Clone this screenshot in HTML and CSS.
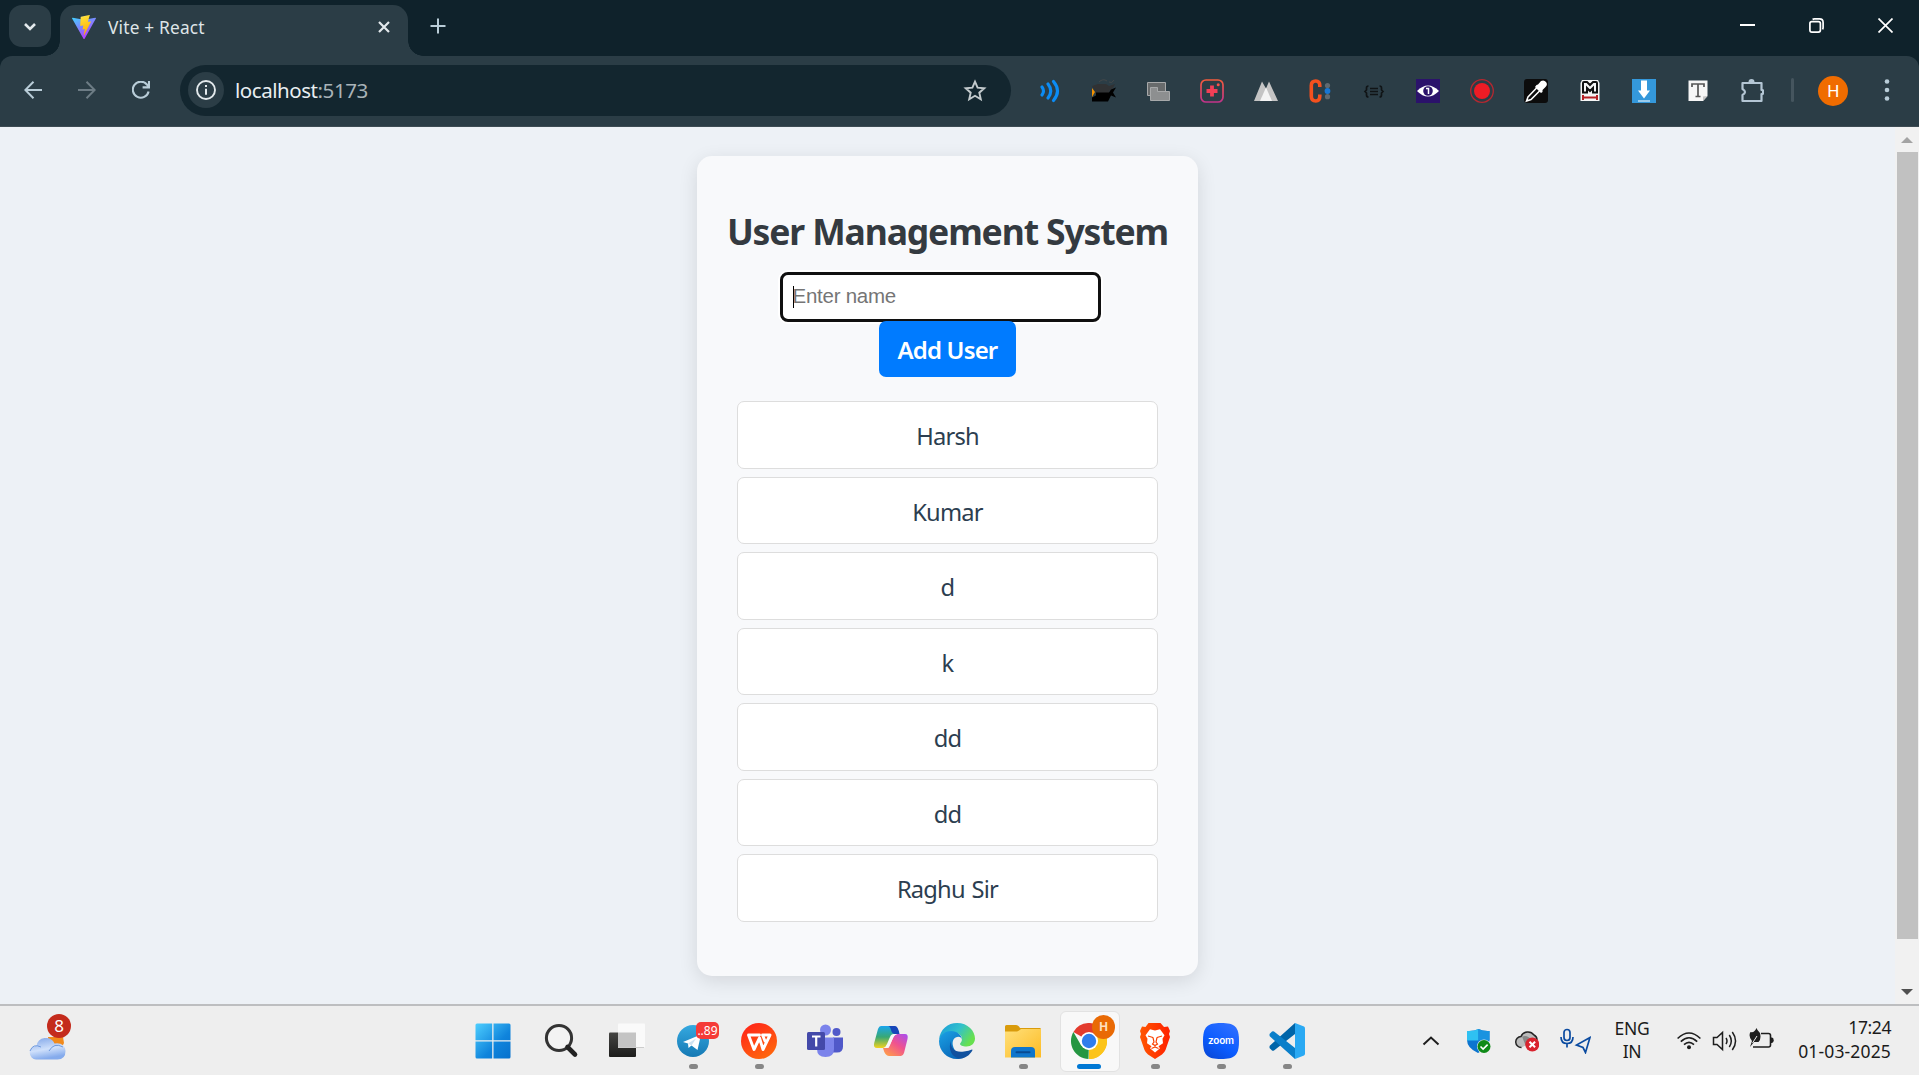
FILE: index.html
```html
<!DOCTYPE html>
<html lang="en">
<head>
<meta charset="utf-8">
<title>Vite + React</title>
<link rel="stylesheet" href="styles.css">
</head>
<body>
<div class="screen">
  <header class="tabstrip">
    <button class="tab-search" aria-label="Search tabs"><svg width="14" height="9" viewBox="0 0 14 9"><path d="M2 2l5 5 5-5" fill="none" stroke="#e3e9ec" stroke-width="2.6"/></svg></button>
    <div class="tab">
      <svg class="favicon" width="24" height="24" viewBox="0 0 24 24">
        <defs>
          <linearGradient id="va" x1="0" y1="0" x2=".6" y2="1"><stop offset="0" stop-color="#41d1ff"/><stop offset="1" stop-color="#bd34fe"/></linearGradient>
          <linearGradient id="vb" x1=".4" y1="0" x2=".6" y2="1"><stop offset="0" stop-color="#ffea83"/><stop offset=".1" stop-color="#ffdd35"/><stop offset="1" stop-color="#ffa800"/></linearGradient>
        </defs>
        <path d="M23.9 3.6L12.6 23.7a.6.6 0 01-1.1 0L.1 3.6a.6.6 0 01.6-.9L12 4.7l11.300-2a.6.6 0 01.6.9z" fill="url(#va)"/>
        <path d="M17.400 0L9 1.700a.4.4 0 00-.3.3L8.200 10.600c0 .2.2.4.4.3l2.300-.5c.2 0 .4.200.4.4l-.7 3.400c0 .2.1.4.4.3l1.400-.4c.2 0 .4.100.4.300l-1.100 5.300c-.1.3.4.500.5.200L19 6.800c.1-.2-.1-.5-.4-.400l-2.400.4c-.2 0-.4-.2-.3-.4L17.800.3c0-.2-.2-.4-.4-.300z" fill="url(#vb)"/>
      </svg>
      <span class="tab-title">Vite + React</span>
      <svg class="tab-close" width="12" height="12" viewBox="0 0 12 12"><path d="M1 1l10 10M11 1L1 11" stroke="#e3e9ec" stroke-width="2.2"/></svg>
    </div>
    <svg class="new-tab" width="16" height="16" viewBox="0 0 16 16"><path d="M8 .5v15M.5 8h15" stroke="#b9cdd8" stroke-width="2"/></svg>
    <div class="window-controls">
      <span><svg width="15" height="15" viewBox="0 0 15 15"><path d="M0 7h15" stroke="#fff" stroke-width="2"/></svg></span>
      <span><svg width="15" height="15" viewBox="0 0 15 15" fill="none" stroke="#fff" stroke-width="1.700"><rect x=".9" y="3.600" width="10.500" height="10.500" rx="2"/><path d="M3.600 1.500Q4.300.9 5.400.9H10.500Q14.100.9 14.100 4.500V9.600Q14.100 10.700 13.500 11.400"/></svg></span>
      <span><svg width="15" height="15" viewBox="0 0 15 15"><path d="M.5.5l14 14M14.500.5l-14 14" stroke="#fff" stroke-width="1.700"/></svg></span>
    </div>
  </header>

  <nav class="toolbar">
    <span class="nav-btn"><svg width="18" height="18" viewBox="0 0 18 18" fill="none" stroke="#b9cdd8" stroke-width="2"><path d="M18 9H1.500M9.500.8L1.300 9l8.200 8.200"/></svg></span>
    <span class="nav-btn"><svg width="18" height="18" viewBox="0 0 18 18" fill="none" stroke="#6d7c85" stroke-width="2"><path d="M0 9h16.500M8.500.8L16.700 9l-8.200 8.200"/></svg></span>
    <span class="nav-btn"><svg width="18" height="18" viewBox="0 0 18 18" fill="none" stroke="#b9cdd8" stroke-width="2.100"><path d="M16.600 10.500A8 8 0 1 1 14.900 3.500L17 5.800M17 0v6.400h-6.400"/></svg></span>
    <div class="omnibox">
      <span class="site-info"><svg width="20" height="20" viewBox="0 0 20 20"><circle cx="10" cy="10" r="9" fill="none" stroke="#e3e9ec" stroke-width="1.900"/><path d="M10 8.700v6.100M10 5v2.100" stroke="#e3e9ec" stroke-width="2"/></svg></span>
      <span class="url">localhost<span class="port">:5173</span></span>
      <svg class="star" width="24" height="23" viewBox="0 0 24 23"><path d="M12 2.600l2.600 6.100 6.700.6-5 4.400 1.500 6.500-5.800-3.400-5.800 3.400 1.500-6.500-5-4.400 6.700-.6z" fill="none" stroke="#c3cacd" stroke-width="1.900"/></svg>
    </div>
    <div class="extensions">
      <svg viewBox="0 0 24 24" fill="none" stroke="#0b8cf5" stroke-width="3.100" stroke-linecap="round"><path d="M4 8q3 4 0 8M10 5q5.500 7 0 14M15.500 2.500q8 9.500 0 19"/></svg>
      <svg viewBox="0 0 24 24"><path d="M0 9l3 4-3 5z" fill="#f39200"/><path d="M0 7l6-2h8l3 2 6-2-2 4-4 3 1 2H4z" fill="#303234"/><path d="M7 3q4-4 8-1M17 3q3 2 5-2" stroke="#44484a" fill="none"/><path d="M4 13.500h13l2-3 5-2-3 5 3 5-5-2-3 6H0v-4l4-2z" fill="#000"/></svg>
      <svg viewBox="0 0 24 24" stroke="#a7a9aa"><path d="M1.500 3.500h18v13h-18z" fill="#686b6c"/><path d="M4.500 8.500h7v4h12v9h-19z" fill="#8d8f90"/></svg>
      <svg viewBox="0 0 24 24"><defs><linearGradient id="ig" x1="0" y1="0" x2="0" y2="1"><stop offset="0" stop-color="#f45b3c"/><stop offset="1" stop-color="#c2338a"/></linearGradient></defs><rect x="1" y="1" width="22" height="22" rx="5" fill="none" stroke="url(#ig)" stroke-width="1.700"/><path d="M12 6.500v11M6.500 12h11" stroke="#f23f56" stroke-width="3.800"/><circle cx="18.200" cy="5.800" r="1.500" fill="#f4524b"/></svg>
      <svg viewBox="0 0 24 24"><path d="M0 22L8 2.500l4 7 3-7L24 22z" fill="#c4c4c4"/><path d="M6 22l6-13.500L18 22z" fill="#f4f4f4"/></svg>
      <svg viewBox="0 0 24 24"><path d="M11.800 8V6.500Q11.800 2 7.800 2Q3.300 2 3.300 6.500V17Q3.300 22 7.800 22Q11.800 22 11.800 17V15.500" fill="none" stroke="#f4511e" stroke-width="3.600"/><g fill="#606970"><circle cx="19.500" cy="6.500" r="2.600"/><circle cx="19.500" cy="17.700" r="2.600"/></g><circle cx="19.500" cy="12" r="2.900" fill="#1976d2"/></svg>
      <svg viewBox="0 0 24 24" fill="none" stroke="#101416" stroke-width="1.700"><path d="M6.500 7Q4.500 7 4.500 9v2L3 12.500 4.500 14v2q0 2 2 2M17.500 7q2 0 2 2v2l1.500 1.500-1.500 1.500v2q0 2-2 2M8 9.500h8M8 12.500h8M8 15.500h8"/></svg>
      <svg viewBox="0 0 24 24"><path fill="#2b126b" d="M0 0h24v24H0z"/><path d="M1 12Q12 1 23 12Q12 23 1 12z" fill="#fff"/><circle cx="12" cy="12" r="4.800" fill="#2b126b"/><path d="M10 9.500h2.500V15" fill="none" stroke="#fff" stroke-width="1.500"/></svg>
      <svg viewBox="0 0 24 24"><circle cx="12" cy="12" r="11.300" fill="none" stroke="#b42830" stroke-width="1.300"/><circle cx="12" cy="12" r="8" fill="#ee1c25"/></svg>
      <svg viewBox="0 0 24 24"><rect width="24" height="24" rx="3" fill="#0c0c0c"/><path d="M13 8.500L4 18l-1.500 4L7 20.500l9-9z" fill="none" stroke="#fff" stroke-width="1.500"/><path d="M12.500 6l1.500-.5 3-3.500q3-1.500 5 1t-.5 5L18.500 11v2l-1.500 1-6-6z" fill="#fff"/></svg>
      <svg viewBox="0 0 24 24"><path d="M4 1h16l1.500 3v18h-19V4z" fill="#f5f5f5"/><path d="M5 13.500V4q0-1 1-1h3l3 3 3-3h3q1 0 1 1v9.500h-4V9l-3 3-3-3v4.500z" fill="none" stroke="#111" stroke-width="2"/><path d="M5 16v5M19 16v5M5 18.500h14" stroke="#b72025" stroke-width="2"/></svg>
      <svg viewBox="0 0 24 24"><path fill="#3498db" d="M0 0h24v24H0z"/><path d="M9 1.500h6v10h3l-6 8-6-8h3zM6 21.500h12v1H6z" fill="#fff"/></svg>
      <svg viewBox="0 0 24 24"><path d="M2.500 1.500h19V17L17 22H2.500z" fill="#f6f6f6"/><path d="M21.500 17L17 22v-4.500z" fill="#c4c4c4"/><path d="M6 8V5h12v3M12 5v12M9.500 17.500h5" fill="none" stroke="#555" stroke-width="1.700"/></svg>
      <svg class="puzzle" viewBox="0 0 24 24"><path d="M2.500 4h19v7a2 2 0 010 4v7h-19v-6q5-3 0-6z" fill="none" stroke="#b4c6d4" stroke-width="2.200" stroke-linejoin="round"/><path d="M8.500 3a3 3 0 016 0M22 10a3 3 0 010 5.700z" fill="#b4c6d4"/></svg>
    </div>
    <span class="divider"></span>
    <span class="avatar">H</span>
    <svg class="kebab" width="6" height="22" viewBox="0 0 6 22" fill="#b9cdd8"><circle cx="3" cy="2.500" r="2.300"/><circle cx="3" cy="11" r="2.300"/><circle cx="3" cy="19.500" r="2.300"/></svg>
  </nav>

  <main class="viewport">
    <div class="page">
      <section class="card">
        <h1>User Management System</h1>
        <div class="field"><input type="text" placeholder="Enter name"><i class="caret"></i></div>
        <button class="add">Add User</button>
        <ul class="users">
          <li>Harsh</li><li>Kumar</li><li>d</li><li>k</li><li>dd</li><li>dd</li><li>Raghu Sir</li>
        </ul>
      </section>
    </div>
    <div class="scrollbar">
      <svg width="12" height="6" viewBox="0 0 12 6"><path d="M0 6l6-6 6 6z" fill="#a3a3a3"/></svg>
      <div class="thumb"></div>
      <svg width="12" height="6" viewBox="0 0 12 6"><path d="M0 0l6 6 6-6z" fill="#505050"/></svg>
    </div>
  </main>

  <footer class="taskbar">
    <div class="weather">
      <svg width="42" height="44" viewBox="0 0 42 44">
        <defs><linearGradient id="cl" x1="0" y1="0" x2=".3" y2="1"><stop offset="0" stop-color="#7ea4e8"/><stop offset=".6" stop-color="#cfe0fb"/><stop offset="1" stop-color="#85abec"/></linearGradient></defs>
        <path d="M19 20h15l1 6-2 4H20z" fill="#f18a1c"/>
        <path d="M7 42.500a6.800 6.800 0 01-.5-13.500q.6 0 1 0a9.500 9.500 0 0118-2.500q10-1.500 11 7.500 0 8.500-8 8.500z" fill="url(#cl)"/>
        <path d="M1 34q3-8 11-4M20 34q5-9 14-4" stroke="#709bdf" fill="none" stroke-width="1"/>
      </svg>
      <span class="badge">8</span>
    </div>
    <div class="apps">
      <div class="app start"><svg viewBox="0 0 36 36"><defs><linearGradient id="w" gradientUnits="userSpaceOnUse" x1="0" y1="0" x2="36" y2="36"><stop offset="0" stop-color="#4fd0ff"/><stop offset=".6" stop-color="#0f84dc"/><stop offset="1" stop-color="#0670cc"/></linearGradient></defs><path d="M2 .5H17.200V17.200H.5V2Q.5.500 2 .500zM18.500.5H34Q35.500.5 35.500 2V17.200H18.500zM.5 18.500H17.200V35.500H2Q.5 35.500.5 34zM18.500 18.500H35.500V34Q35.500 35.500 34 35.500H18.500z" fill="url(#w)"/></svg></div>
      <div class="app"><svg viewBox="0 0 36 36"><circle cx="16" cy="15" r="12.600" fill="#f3f3f3" stroke="#333" stroke-width="3"/><path d="M24.500 24l7.500 7.500" stroke="#222" stroke-width="4.600" stroke-linecap="round"/></svg></div>
      <div class="app"><svg viewBox="0 0 36 36"><defs><linearGradient id="tv" x1="0" y1="0" x2="0" y2="1"><stop offset="0" stop-color="#454543"/><stop offset="1" stop-color="#1c1c1b"/></linearGradient></defs><rect y="9.500" width="27" height="24.500" rx="1" fill="url(#tv)"/><rect x="9" y=".5" width="27" height="24" rx="1" fill="#fafafa"/><path d="M9 9.500h18v15H9z" fill="#c4c4c4"/><path d="M9 24.500h26" stroke="#ccc"/></svg></div>
      <div class="app running"><svg viewBox="0 0 36 36"><defs><linearGradient id="tg" x1="0" y1="0" x2="0" y2="1"><stop offset="0" stop-color="#35a9e0"/><stop offset="1" stop-color="#1579b4"/></linearGradient></defs><circle cx="18" cy="18" r="16" fill="url(#tg)"/><path d="M8 19L26 11.500 22.500 27 16.500 22.500 13.500 25 13 20.500z" fill="#fff"/><path d="M13 20.500l8-5-4.500 7" fill="#cfe3f2"/></svg><span class="count">..89</span></div>
      <div class="app running"><svg viewBox="0 0 36 36"><defs><linearGradient id="wp" x1="0" y1="0" x2=".6" y2="1"><stop offset="0" stop-color="#ff1f1a"/><stop offset="1" stop-color="#ff640d"/></linearGradient></defs><circle cx="18" cy="18" r="18" fill="url(#wp)"/><path d="M18.500 12H7.500L13 26.500 18.500 15 22 26.500 29 12H21.500L24 18" fill="none" stroke="#fff" stroke-width="2.900" stroke-linejoin="round" stroke-linecap="round"/></svg></div>
      <div class="app"><svg viewBox="0 0 36 36"><circle cx="18.500" cy="7" r="5.500" fill="#7b83eb"/><circle cx="29.500" cy="9" r="4" fill="#5059c9"/><path d="M26 14.500h10v9q0 6-6 6h-4z" fill="#5059c9"/><path d="M10 14.500h17V26q0 8-8.500 8T10 26z" fill="#7b83eb"/><rect y="9" width="18" height="18" rx="1.500" fill="#4349a9"/><path d="M5 13.500h8.500M9.200 13.500v10" stroke="#fff" stroke-width="2.200"/></svg></div>
      <div class="app"><svg viewBox="0 0 36 36"><defs><linearGradient id="c1" x1="0" y1="0" x2="0" y2="1"><stop offset="0" stop-color="#1aa6ee"/><stop offset=".5" stop-color="#38a874"/><stop offset="1" stop-color="#f4d31d"/></linearGradient><linearGradient id="c2" x1="1" y1="0" x2=".2" y2="1"><stop offset="0" stop-color="#a64df4"/><stop offset=".5" stop-color="#f0528e"/><stop offset="1" stop-color="#ff9a4c"/></linearGradient></defs><path d="M8 3h12.500q4 0 5.500 8h-6l-5 11q-1.500 3-4 3H4q-4 0-2.800-5L5 6q1-3 3-3z" fill="url(#c1)"/><path d="M15 3h7q3 0 4.500 8H22q-3 0-4-4t-3-4z" fill="#1746b9"/><path d="M28 33H16q-4 0-6-8h5.500l5-11q1.500-3 4-3H32q3.500 0 2.500 5L31 30q-1 3-3 3z" fill="url(#c2)"/><path d="M21 11h3q-3 1-4 4l-3 7q-1 3-4 3h-3q3-1 4-4l3-7q1-3 4-3z" fill="#f7f7f7"/></svg></div>
      <div class="app"><svg viewBox="0 0 36 36"><defs><linearGradient id="e1" x1="0" y1="0" x2="1" y2=".5"><stop offset="0" stop-color="#1899dc"/><stop offset=".55" stop-color="#32c1cb"/><stop offset="1" stop-color="#67e04f"/></linearGradient><linearGradient id="e2" x1="0" y1="0" x2=".6" y2="1"><stop offset="0" stop-color="#1ca2e5"/><stop offset="1" stop-color="#0866b8"/></linearGradient></defs><path d="M0 17C1 6 9 0 18 0c11 0 18 8 18 15.500 0 5-4 8-8.500 8-4 0-6.500-1.500-6.500-2.500s2-2 2-5c0-4-4-6.500-9-6.500S2 12 0 17z" fill="url(#e1)"/><path d="M0 18C1 11 7 8 12 8c6 0 11 4 11 9q-1-4-5-3c-4 1-5 5-4 9 1 5 6 9 12 11-4 2-6 2-8 2C8 36 0 28 0 18z" fill="url(#e2)"/><path d="M12 18c-1 7 4 12 13 10.500q5-.5 8-2c1 0 .5 1-1 3-3 4-7 6-12 6C12 34 9 25 12 18z" fill="#11519e"/></svg></div>
      <div class="app running"><svg viewBox="0 0 36 36"><defs><linearGradient id="fo" x1="0" y1="0" x2="1" y2="1"><stop offset="0" stop-color="#ffe07b"/><stop offset="1" stop-color="#fdbb23"/></linearGradient></defs><path d="M0 3.500Q0 2 1.500 2H11q2 0 3 1.500L15 5h20q1 0 1 1.500V10H0z" fill="#d99b0b"/><path d="M0 8.500h11.500q1.500 0 2.500-1L16 6h20v28.500H0z" fill="url(#fo)"/><path d="M6 34.500V28q0-4 4-4h16q4 0 4 4v6.500z" fill="#0f76cc"/><path d="M11.500 29.300h13" stroke="#084b92" stroke-width="2" stroke-linecap="round"/></svg></div>
      <div class="app active"><svg viewBox="0 0 36 36"><path d="M18 18L2.400 9A18 18 0 0133.600 9z" fill="#e33b2e"/><path d="M18 18L33.600 9A18 18 0 0118 36z" fill="#fcc41a"/><path d="M18 18l-.5 18A18 18 0 012.400 9L10.200 22.500 18 27z" fill="#259642"/><path d="M18 36L25.800 22.500V9.500h8A18 18 0 0118 36z" fill="#fcc41a"/><circle cx="18" cy="18" r="9" fill="#fff"/><circle cx="18" cy="18" r="7.200" fill="#2f7ded"/></svg><span class="profile">H</span></div>
      <div class="app running"><svg viewBox="0 0 36 36"><defs><linearGradient id="br" x1="0" y1="0" x2="1" y2="0"><stop offset="0" stop-color="#ff5601"/><stop offset="1" stop-color="#ff2000"/></linearGradient></defs><path d="M11.500 0h12l3.500 4 4-.5L33 8l-1 3 1 3-4.500 13q-1 2.500-3.500 4.500L18 36l-7-4.500Q8.500 29.500 7.500 27L3 14l1-3-1-3 2-4.500 3.500.5z" fill="url(#br)"/><path d="M18 7.500l5-1.200 4.500 6-2 3.500.5 4.500-4.500 3 1.500 2L18 29.500l-5-4.200 1.500-2-4.500-3 .5-4.500-2-3.500 4.500-6z" fill="#fff"/><path d="M11 13l5 1.500M25 13l-5 1.500M16 14.500l1 4.500-1.500 2L18 22.500 20.500 21 19 19l1-4.500M18 22.500V24M14.500 25.500l3.500-1.500 3.500 1.500" fill="none" stroke="#fb4200" stroke-width="1.200"/></svg></div>
      <div class="app running"><svg viewBox="0 0 36 36"><defs><linearGradient id="zo" x1="0" y1="1" x2=".6" y2="0"><stop offset="0" stop-color="#0844d0"/><stop offset=".5" stop-color="#0b5cff"/><stop offset="1" stop-color="#2a6cff"/></linearGradient></defs><path d="M18 0C32 0 36 4 36 18S32 36 18 36 0 32 0 18 4 0 18 0z" fill="url(#zo)"/></svg><span class="zoom-word">zoom</span></div>
      <div class="app running"><svg viewBox="0 0 36 36"><path d="M26 0l9 3.500q1 .5 1 2v25q0 1.500-1 2L26 36z" fill="#2aa9f3"/><path d="M0 24.500l3 3q1 .5 2 0L26 11V0L1 22.500q-1 1 0 2z" fill="#0065a9"/><path d="M0 11.500l3-3q1-.5 2 0L26 25v11L1 13.500q-1-1 0-2z" fill="#0a7fca"/></svg></div>
    </div>
    <div class="tray">
      <span class="t"><svg width="18" height="12" viewBox="0 0 18 12"><path d="M1.500 9.500L9 2.500l7.500 7" fill="none" stroke="#1e1e1e" stroke-width="2"/></svg></span>
      <span class="t"><svg width="24" height="24" viewBox="0 0 24 24"><path d="M0 2q7 .5 11.500-2Q16 2.500 22.500 2v9q0 8-11.500 13Q0 19 0 11z" fill="#0c75cf"/><path d="M0 2q7 .5 11.500-2v11.500H0z" fill="#2fc1f2"/><path d="M11.500 0Q16 2.500 22.500 2v9.500h-11z" fill="#1a93e0"/><circle cx="17" cy="17.500" r="7" fill="#eee"/><circle cx="17" cy="17.500" r="6.500" fill="#0f8a17"/><path d="M13.500 17.500l2.600 2.600 4.500-4.500" stroke="#fff" stroke-width="1.600" fill="none"/></svg></span>
      <span class="t"><svg width="24" height="22" viewBox="0 0 24 22"><path d="M6.500 17.500a5.500 5.500 0 01-.5-11A7.500 7.500 0 0119 5q3 1.500 3 5" fill="#bcbcbc" stroke="#252525" stroke-width="1.500"/><path d="M7 6.500q6-2 10 4l-6 6z" fill="#888"/><circle cx="17.300" cy="14.500" r="7" fill="#d9232e"/><path d="M14.500 11.700l5.600 5.600m0-5.600l-5.600 5.600" stroke="#fff" stroke-width="2"/></svg></span>
      <span class="t"><svg width="31" height="26" viewBox="0 0 31 26" fill="none" stroke="#0b4ba0" stroke-width="1.700"><rect x="4" y="1.500" width="6" height="11" rx="3"/><path d="M1 9q0 6.500 6 6.500T13 9M7 15.500v4M30 9.500L16.500 17l6.500 2.500 2.500 5z"/></svg></span>
      <span class="lang"><span>ENG</span><span>IN</span></span>
      <span class="s"><svg width="24" height="18" viewBox="0 0 24 18" fill="none" stroke="#1e1e1e" stroke-width="1.600"><path d="M.6 6.500Q12-4.500 23.400 6.500M3.800 9.700q8.200-7.900 16.400 0M7 12.700q5-4.700 10 0"/><circle cx="12" cy="15.300" r="2" fill="#1e1e1e" stroke="none"/></svg></span>
      <span class="s"><svg width="26" height="22" viewBox="0 0 26 22" fill="none" stroke="#1e1e1e" stroke-width="1.500"><path d="M1.500 7.500H5l5.500-5v17l-5.500-5H1.500zM14 8q2 3 0 6M17.300 5q4 6 0 12M20.300 2q6.500 9 0 18"/></svg></span>
      <span class="s battery"><svg width="25" height="22" viewBox="0 0 25 22"><path d="M12 5.500h7.500Q21.500 5.500 21.500 7.500v9.500q0 2-2 2H4" fill="none" stroke="#1e1e1e" stroke-width="1.600"/><path d="M22 9.500h1q1.700 0 1.700 2.700T23 15h-1z" fill="#1e1e1e"/><path d="M7.500 0Q8 2 11 5q1.500 6-1.500 9H5L1 19 3 13Q-1 8 1.500 4q4 1 6-4z" fill="#1e1e1e"/><path d="M3.500 15L8 8" stroke="#eee"/></svg></span>
      <span class="clock"><span class="time">17:24</span><span>01-03-2025</span></span>
    </div>
  </footer>
</div>
</body>
</html>
```
FILE: styles.css
```css
* { box-sizing: border-box; }
body { margin: 0; overflow: hidden; font-family: "Noto Sans", "Open Sans", sans-serif; }
.screen { width: 1919px; height: 1075px; display: flex; flex-direction: column; background: #0f222b; }
svg { display: block; flex: none; }
button { border: 0; padding: 0; font-family: inherit; }

/* Browser tab strip */
.tabstrip { height: 56px; flex: none; display: flex; align-items: flex-start; padding-left: 9px; }
.tab-search { width: 42px; height: 42px; margin-top: 5px; border-radius: 13px; background: #2b3d46; display: flex; align-items: center; justify-content: center; }
.tab { position: relative; width: 348px; height: 51px; margin: 5px 0 0 9px; padding: 0 18px 8px 12px; background: #2b3d46; border-radius: 15px 15px 0 0; display: flex; align-items: center; }
.tab::before, .tab::after { content: ""; position: absolute; bottom: 0; width: 15px; height: 15px; }
.tab::before { left: -15px; background: radial-gradient(circle at 0 0, transparent 14.500px, #2b3d46 15px); }
.tab::after { right: -15px; background: radial-gradient(circle at 100% 0, transparent 14.500px, #2b3d46 15px); }
.tab-title { margin-left: 12px; padding-top: 2px; flex: 1; font-size: 17.300px; letter-spacing: .2px; color: #dfe5e8; white-space: nowrap; }
.new-tab { margin: 18px 0 0 22px; }
.window-controls { margin-left: auto; margin-right: -1px; display: flex; }
.window-controls span { width: 69px; height: 51px; display: flex; align-items: center; justify-content: center; }

/* Address bar row */
.toolbar { height: 71px; flex: none; display: flex; align-items: center; padding: 0 29px 2px 6px; background: #2b3d46; border-radius: 12px 12px 0 0; border-bottom: 1px solid #3d4b53; }
.nav-btn { width: 54px; display: flex; justify-content: center; }
.omnibox { width: 831px; height: 51px; margin-left: 12px; padding: 0 24px 0 8px; border-radius: 26px; background: #13262f; display: flex; align-items: center; }
.site-info { width: 36px; height: 36px; border-radius: 50%; background: #2b3d46; display: flex; align-items: center; justify-content: center; }
.url { margin-left: 11px; flex: 1; font-size: 20.500px; letter-spacing: -.450px; color: #e8eef1; }
.port { color: #a9b3b8; }
.extensions { margin: 1px 0 0 12px; display: grid; grid-template-columns: repeat(14, 54.040px); justify-items: center; align-items: center; }
.extensions svg { width: 24px; height: 24px; }
.divider { width: 3px; height: 24px; margin-left: 12px; border-radius: 2px; background: #45555e; }
.avatar { width: 30px; height: 30px; margin: 1px 0 0 24px; border-radius: 50%; background: #f06c00; color: #fff; font: 17px/31px Roboto, sans-serif; text-align: center; }
.kebab { margin-left: auto; }

/* Web page */
.viewport { flex: 1; min-height: 0; display: flex; background: #edf1f6; }
.page { width: 1895px; padding-top: 29px; }
.card { width: 501px; height: 820px; margin: 0 auto; padding-top: 49px; display: flex; flex-direction: column; align-items: center; background: #f8f9fb; border-radius: 15px; box-shadow: 0 5px 19px rgba(0, 0, 0, .11); }
h1 { margin: 0; font-size: 35.500px; line-height: 53px; font-weight: 700; letter-spacing: -1.130px; color: #343a40; white-space: nowrap; }
.field { position: relative; margin: 14px 15px 0 0; }
input { display: block; width: 321px; height: 50px; padding: 0 0 2px 10px; border: 3px solid #101010; border-radius: 8px; outline: 0; background: #fff; box-shadow: 0 0 0 2px #fff; font: 20.500px "Liberation Sans", Arial, sans-serif; letter-spacing: -.250px; color: #222; }
input::placeholder { color: #757575; opacity: 1; }
.caret { position: absolute; left: 13px; top: 14px; width: 1px; height: 22px; background: #000; }
.add { position: relative; width: 137px; height: 56px; margin-top: -1px; border-radius: 7px; background: #007bff; color: #fff; font-size: 24px; font-weight: 600; letter-spacing: -.850px; white-space: nowrap; }
.users { list-style: none; margin: 24px 0 0; padding: 0; width: 421px; display: flex; flex-direction: column; gap: 8px; }
.users li { height: 67.500px; border: 1px solid #ddd; border-radius: 7px; background: #fff; color: #2c3e50; font-size: 23.700px; line-height: 69px; letter-spacing: -.8px; word-spacing: 1.500px; text-align: center; }
.scrollbar { width: 24px; padding: 10px 2px 9px 2px; background: #f1f1f1; display: flex; flex-direction: column; align-items: center; }
.thumb { width: 21px; height: 787px; margin: 9px 0 auto; background: #c1c1c1; }

/* Windows taskbar */
.taskbar { height: 71px; flex: none; display: flex; align-items: center; border-top: 2px solid #bdbec0; background: #eee; color: #1b1b1b; }
.weather { position: relative; width: 430px; padding: 0 0 4px 29px; }
.badge { position: absolute; left: 47px; top: -3px; width: 24px; height: 24px; border-radius: 50%; background: #c42b1c; color: #fff; font-size: 17px; line-height: 24px; text-align: center; }
.apps { margin-left: 32px; display: grid; grid-template-columns: repeat(13, 66px); }
.app { position: relative; height: 69px; display: flex; align-items: center; justify-content: center; }
.start { padding-right: 4px; }
.app svg { position: relative; width: 36px; height: 36px; }
.running::after, .active::after { content: ""; position: absolute; bottom: 6px; left: calc(50% - 4.500px); width: 9px; height: 5px; border-radius: 3px; background: #868686; }
.active::before { content: ""; position: absolute; left: 4px; top: 5px; width: 58px; height: 59px; border: 1px solid #e2e2e2; border-radius: 6px; background: #f8f8f8; }
.active::after { left: calc(50% - 12px); width: 24px; background: #0078d4; }
.count { position: absolute; left: 36px; top: 16px; width: 23px; height: 17px; border-radius: 5px; background: #f53b38; color: #fff; font-size: 12px; line-height: 17px; text-align: center; }
.profile { position: absolute; left: 36px; top: 9px; width: 23px; height: 24px; border-radius: 50%; background: #e96a05; color: #ffe0c0; font: 700 12px/24px "Liberation Sans", sans-serif; text-align: center; }
.zoom-word { position: absolute; margin-top: -2px; color: #fff; font: 600 10px/12px Inter, sans-serif; letter-spacing: -.2px; }
.tray { margin-left: 87px; display: flex; align-items: center; }
.t { width: 48px; display: flex; justify-content: center; }
.s { width: 36px; display: flex; justify-content: center; }
.battery { padding-bottom: 3px; }
.lang { width: 66px; margin-right: 6px; padding-bottom: 1px; display: flex; flex-direction: column; align-items: center; font-size: 17.500px; line-height: 23px; letter-spacing: -.3px; }
.clock { width: 112px; padding-bottom: 3px; display: flex; flex-direction: column; align-items: flex-end; font-size: 17.500px; line-height: 24px; letter-spacing: .15px; white-space: nowrap; }
.time { letter-spacing: -.4px; }
```
